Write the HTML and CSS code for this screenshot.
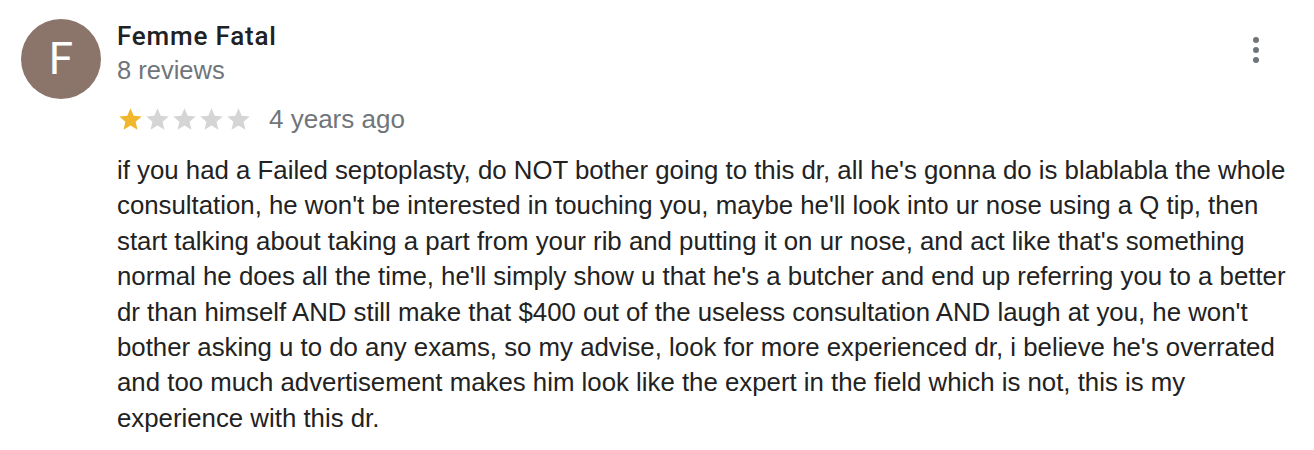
FILE: index.html
```html
<!DOCTYPE html>
<html lang="en">
<head>
    <meta charset="UTF-8">
    <meta name="viewport" content="width=device-width, initial-scale=1.0">
    <title>Review - Femme Fatal</title>
    <link rel="stylesheet" href="styles.css">
</head>
<body>
    <div class="review">
        <div class="avatar">F</div>
        <div class="review-body">
            <div class="review-head">
                <div class="author">
                    <div class="author-name">Femme Fatal</div>
                    <div class="author-meta">8 reviews</div>
                </div>
                <button class="more-button" aria-label="More">
                    <span class="dot"></span>
                    <span class="dot"></span>
                    <span class="dot"></span>
                </button>
            </div>

            <div class="rating-row">
                <div class="stars">
                    <svg class="star filled" viewBox="0 0 24 24"><path d="M12 17.27L18.18 21l-1.64-7.03L22 9.24l-7.19-.61L12 2 9.19 8.63 2 9.24l5.46 4.73L5.82 21z"/></svg>
                    <svg class="star" viewBox="0 0 24 24"><path d="M12 17.27L18.18 21l-1.64-7.03L22 9.24l-7.19-.61L12 2 9.19 8.63 2 9.24l5.46 4.73L5.82 21z"/></svg>
                    <svg class="star" viewBox="0 0 24 24"><path d="M12 17.27L18.18 21l-1.64-7.03L22 9.24l-7.19-.61L12 2 9.19 8.63 2 9.24l5.46 4.73L5.82 21z"/></svg>
                    <svg class="star" viewBox="0 0 24 24"><path d="M12 17.27L18.18 21l-1.64-7.03L22 9.24l-7.19-.61L12 2 9.19 8.63 2 9.24l5.46 4.73L5.82 21z"/></svg>
                    <svg class="star" viewBox="0 0 24 24"><path d="M12 17.27L18.18 21l-1.64-7.03L22 9.24l-7.19-.61L12 2 9.19 8.63 2 9.24l5.46 4.73L5.82 21z"/></svg>
                </div>
                <span class="review-date">4 years ago</span>
            </div>

            <p class="review-text">if you had a Failed septoplasty, do NOT bother going to this dr, all he's gonna do is blablabla the whole consultation, he won't be interested in touching you, maybe he'll look into ur nose using a Q tip, then start talking about taking a part from your rib and putting it on ur nose, and act like that's something normal he does all the time, he'll simply show u that he's a butcher and end up referring you to a better dr than himself AND still make that $400 out of the useless consultation AND laugh at you, he won't bother asking u to do any exams, so my advise, look for more experienced dr, i believe he's overrated and too much advertisement makes him look like the expert in the field which is not, this is my experience with this dr.</p>
        </div>
    </div>
</body>
</html>
```

FILE: styles.css
```css
body {
    margin: 0;
    background-color: #ffffff;
    font-family: 'Liberation Sans', Arial, sans-serif;
    color: #222222;
}

.review {
    display: flex;
    gap: 16px;
    padding: 19px 16px 0 21px;
}

.avatar {
    flex: none;
    width: 80px;
    height: 80px;
    border-radius: 50%;
    background-color: #8b746a;
    color: #ffffff;
    font-family: 'Roboto', 'Liberation Sans', sans-serif;
    font-size: 44px;
    display: flex;
    align-items: center;
    justify-content: center;
}

.review-body {
    flex: 1;
}

.review-head {
    display: flex;
    justify-content: space-between;
    align-items: flex-start;
}

.author-name {
    font-family: 'Roboto', 'Liberation Sans', sans-serif;
    font-weight: 500;
    font-size: 26px;
    letter-spacing: 0.8px;
    line-height: 34px;
    color: #202124;
}

.author-meta {
    font-size: 25.5px;
    line-height: 34px;
    color: #70757a;
}

.more-button {
    display: flex;
    flex-direction: column;
    gap: 4px;
    padding: 0;
    margin: 18px 39px 0 0;
    border: none;
    background: none;
    cursor: pointer;
}

.dot {
    width: 6px;
    height: 6px;
    border-radius: 50%;
    background-color: #70757a;
}

.rating-row {
    display: flex;
    align-items: center;
    gap: 17px;
    margin-top: 15px;
    height: 34px;
}

.stars {
    display: flex;
}

.star {
    width: 27px;
    height: 27px;
    fill: #d5d5d5;
}

.star.filled {
    fill: #f0b62c;
}

.review-date {
    font-size: 26px;
    color: #70757a;
}

.review-text {
    margin: 17px 0 0;
    font-size: 25.8px;
    line-height: 35.4px;
}
```
